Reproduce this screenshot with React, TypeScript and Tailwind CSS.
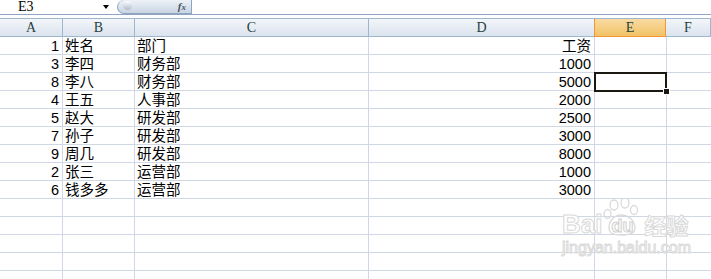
const COLS = [
  { key: 'A', w: 'w-[63px]' },
  { key: 'B', w: 'w-[72px]' },
  { key: 'C', w: 'w-[234px]' },
  { key: 'D', w: 'w-[226px]' },
  { key: 'E', w: 'w-[72px]' },
  { key: 'F', w: 'flex-1' },
]

const rows: [string, string, string, string][] = [
  ['1', '姓名', '部门', '工资'],
  ['3', '李四', '财务部', '1000'],
  ['8', '李八', '财务部', '5000'],
  ['4', '王五', '人事部', '2000'],
  ['5', '赵大', '研发部', '2500'],
  ['7', '孙子', '研发部', '3000'],
  ['9', '周几', '研发部', '8000'],
  ['2', '张三', '运营部', '1000'],
  ['6', '钱多多', '运营部', '3000'],
  ['', '', '', ''],
  ['', '', '', ''],
  ['', '', '', ''],
  ['', '', '', ''],
  ['', '', '', ''],
]

function FormulaBar() {
  return (
    <div className="flex h-[14px] items-stretch bg-white">
      <div className="relative w-[113px] pl-[18px] text-[14px] leading-[14px] text-black [font-family:'Liberation_Serif',serif]">
        E3
        <span className="absolute left-[103px] top-[5px] h-0 w-0 border-x-[3px] border-t-[4px] border-x-transparent border-t-black" />
      </div>
      <div className="relative ml-[4px] flex w-[75px] items-center justify-end rounded-bl-[12px] rounded-tl-[12px] border border-t-0 border-[#8ea4c0] bg-gradient-to-b from-[#eef2f8] to-[#c9d5e4] pr-[5px]">
        <span className="absolute left-[5px] top-[1px] h-[9px] w-[9px] rounded-full bg-gradient-to-b from-[#ffffff] to-[#aebacb]" />
        <span className="text-[11px] font-bold italic leading-none text-[#4a5666] [font-family:'Liberation_Serif',serif]">
          f<span className="text-[9px]">x</span>
        </span>
      </div>
    </div>
  )
}

function Header() {
  return (
    <div className="flex h-[19px] border-y border-[#9eb6ce] bg-gradient-to-b from-[#f3f6fa] to-[#dbe3ee]">
      {COLS.map((c) => {
        const active = c.key === 'E'
        return (
          <div
            key={c.key}
            className={`${c.w} -mb-px flex items-center justify-center border-r text-[14px] leading-none [font-family:'Liberation_Serif',serif] ${
              active
                ? '-ml-px border-b border-l border-[#f29536] bg-gradient-to-b from-[#f9dba3] to-[#f1c263] text-[#27413e]'
                : 'border-[#9eb6ce] text-[#27413e]'
            }`}
          >
            {c.key}
          </div>
        )
      })}
    </div>
  )
}

function Watermark() {
  return (
    <div className="pointer-events-none absolute left-[562px] top-[198px] flex flex-col items-start">
      <div className="flex items-end">
        <span className="text-[26px] font-bold leading-[24px] text-white [-webkit-text-stroke:1px_#d9d9d9] [font-family:'Liberation_Sans',sans-serif]">
          Bai
        </span>
        <span className="relative ml-[1px] flex h-[38px] w-[38px] items-end justify-center">
          <svg viewBox="0 0 38 38" className="absolute inset-0 h-[38px] w-[38px]" fill="none" stroke="#dadada" strokeWidth="1.3">
            <ellipse cx="11" cy="7" rx="4" ry="5" />
            <ellipse cx="22" cy="5" rx="4" ry="5" />
            <ellipse cx="31" cy="12" rx="3.5" ry="4.5" />
            <ellipse cx="4.5" cy="16" rx="3.5" ry="4.5" />
            <path d="M6 30 C6 22 12 17 18 17 C25 17 32 22 32 30 C32 36 25 37 19 37 C12 37 6 36 6 30 Z" />
          </svg>
          <span className="relative mb-[1px] text-[18px] font-bold leading-none text-white [-webkit-text-stroke:1px_#d0d0d0] [font-family:'Liberation_Sans',sans-serif]">
            du
          </span>
        </span>
        <span className="ml-[3px] text-[22px] font-bold leading-[24px] text-white [-webkit-text-stroke:1px_#d9d9d9] [font-family:'Noto_Sans_CJK_SC',sans-serif]">
          经验
        </span>
      </div>
      <div className="mt-[4px] text-[16px] leading-none text-white [-webkit-text-stroke:1px_#dadada] [font-family:'Liberation_Sans',sans-serif]">
        jingyan.baidu.com
      </div>
    </div>
  )
}

export default function App() {
  return (
    <div className="relative h-[279px] w-[711px] overflow-hidden bg-white">
      <FormulaBar />
      <div className="h-[4px] border-t border-[#8ea6c4] bg-white" />
      <Header />
      {rows.map((r, i) => (
        <div
          key={i}
          className="flex h-[18px] text-[14.5px] leading-[17px] text-black [font-family:'Liberation_Sans','Noto_Sans_CJK_SC',sans-serif]"
        >
          <div className="w-[63px] overflow-hidden border-b border-r border-[#d0d7e5] pr-[3px] pt-[1px] text-right">{r[0]}</div>
          <div className="w-[72px] overflow-hidden whitespace-nowrap border-b border-r border-[#d0d7e5] pl-[2px] pt-[1px]">{r[1]}</div>
          <div className="w-[234px] overflow-hidden border-b border-r border-[#d0d7e5] pl-[2px] pt-[1px]">{r[2]}</div>
          <div className="w-[226px] overflow-hidden border-b border-r border-[#d0d7e5] pr-[3px] pt-[1px] text-right">{r[3]}</div>
          <div className="relative w-[72px] border-b border-r border-[#d0d7e5]">
            {i === 2 && (
              <div className="absolute -left-px -top-px z-10 h-[20px] w-[73px] border-2 border-[#1b1812]">
                <span className="absolute -bottom-[4px] -right-[4px] h-[5px] w-[5px] bg-[#1b1812] ring-1 ring-white" />
              </div>
            )}
          </div>
          <div className="flex-1 border-b border-[#d0d7e5]" />
        </div>
      ))}
      <Watermark />
    </div>
  )
}
